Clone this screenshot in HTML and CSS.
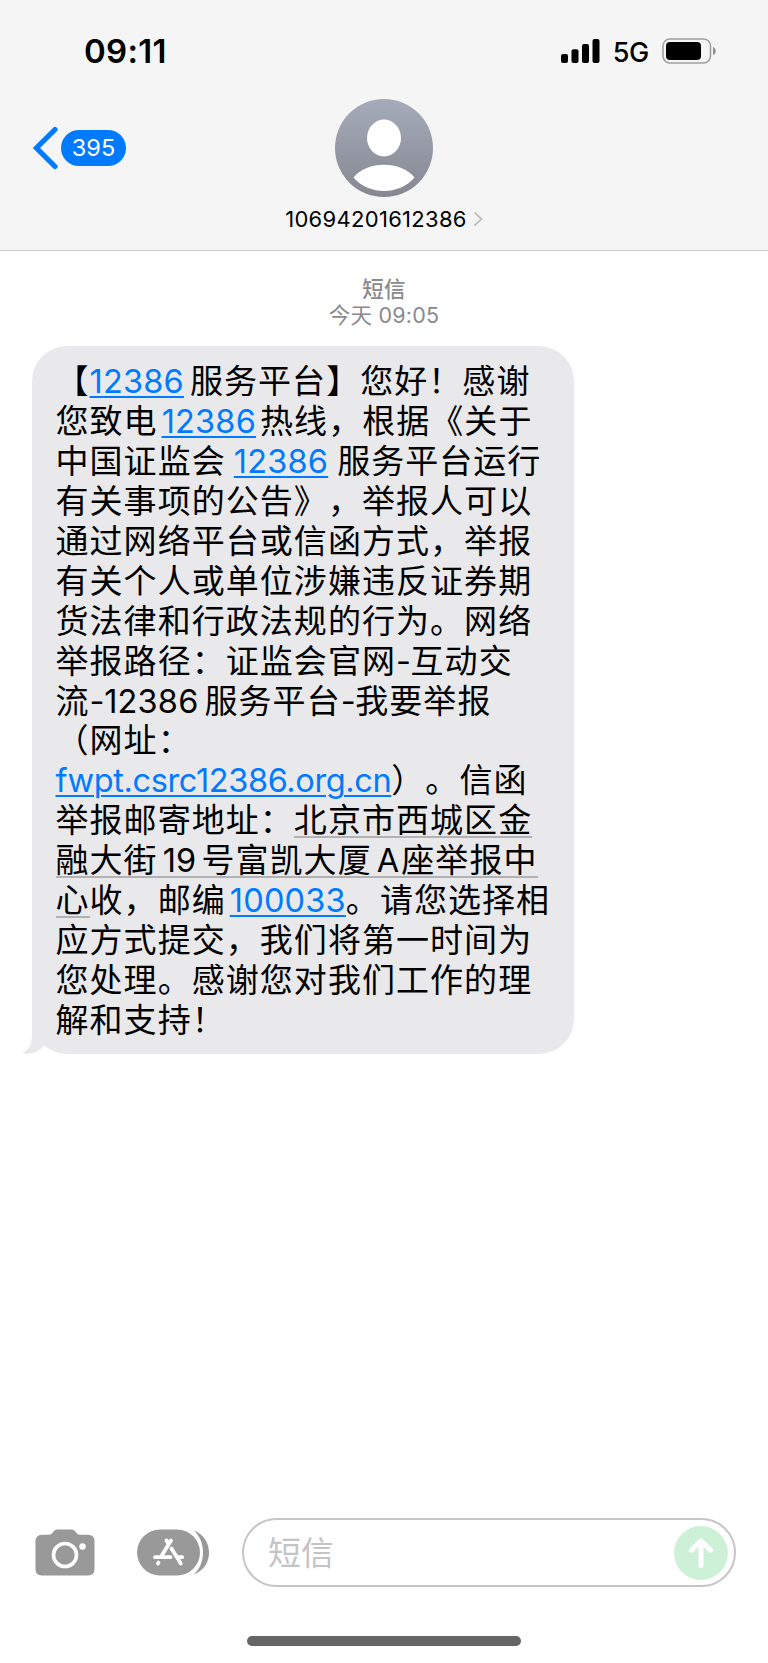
FILE: index.html
```html
<!DOCTYPE html>
<html lang="zh-CN">
<head>
    <meta charset="UTF-8">
    <meta name="viewport" content="width=device-width, initial-scale=1.0">
    <title>短信</title>
    <link rel="stylesheet" href="styles.css">
</head>
<body>
    <header class="header">
        <div class="status-bar">
            <span class="time">09:11</span>
            <div class="status-icons">
                <svg class="signal" width="39" height="24" viewBox="0 0 39 24">
                    <rect x="0" y="15" width="7" height="9" rx="2"/>
                    <rect x="10.5" y="10.3" width="7" height="13.7" rx="2"/>
                    <rect x="21" y="5" width="7" height="19" rx="2"/>
                    <rect x="31.5" y="0" width="7" height="24" rx="2"/>
                </svg>
                <span class="network">5G</span>
                <svg class="battery" width="55" height="26" viewBox="0 0 55 26">
                    <rect x="1" y="1" width="47.5" height="24" rx="7" fill="none" stroke="#a0a0a0" stroke-width="1.6"/>
                    <rect x="4" y="4" width="35" height="18" rx="4"/>
                    <path d="M51 9c3.600 1.200 3.600 7 0 8z" fill="#8f8f8f"/>
                </svg>
            </div>
        </div>
        <div class="nav">
            <a class="back">
                <svg width="26" height="44" viewBox="0 0 26 44">
                    <path d="M22 3.500L3.500 22L22 40.500" fill="none" stroke="#007aff" stroke-width="5.200" stroke-linecap="round" stroke-linejoin="miter"/>
                </svg>
                <span class="unread">395</span>
            </a>
            <div class="contact">
                <svg class="avatar" width="98" height="98" viewBox="0 0 98 98">
                    <defs>
                        <linearGradient id="avatar-bg" x1="0" y1="0" x2="0" y2="1">
                            <stop offset="0" stop-color="#a5abb9"/>
                            <stop offset="1" stop-color="#858891"/>
                        </linearGradient>
                    </defs>
                    <circle cx="49" cy="49" r="49" fill="url(#avatar-bg)"/>
                    <ellipse cx="49" cy="39" rx="17" ry="18.500" fill="#fff"/>
                    <path d="M18.500 78.500C32 61.500 66 61.500 79.500 78.500C64 96.500 34 96.500 18.500 78.500z" fill="#fff"/>
                </svg>
                <div class="contact-name">
                    <span>10694201612386</span>
                    <svg width="10" height="16" viewBox="0 0 10 16">
                        <path d="M1.500 1.500L8.500 8l-7 6.500" fill="none" stroke="#c0c0c2" stroke-width="1.800"/>
                    </svg>
                </div>
            </div>
        </div>
    </header>

    <main class="messages">
        <div class="timestamp">
            <p class="kind">短信</p>
            <p>今天 <span class="clock">09:05</span></p>
        </div>
        <div class="bubble">
            <p>【<a class="num pad">12386</a><span class="after">服务平台】您好！感谢</span></p>
            <p>您致电<a class="num pad gap">12386</a><span class="after-link">热线，根据《关于</span></p>
            <p>中国证监会<a class="num gap-wide">12386</a><span class="after-wide">服务平台运行</span></p>
            <p>有关事项的公告》，举报人可以</p>
            <p>通过网络平台或信函方式，举报</p>
            <p>有关个人或单位涉嫌违反证券期</p>
            <p>货法律和行政法规的行为。网络</p>
            <p>举报路径：证监会官网<span class="dash">-</span>互动交</p>
            <p>流<span class="dash">-</span><span class="num pad">12386</span><span class="after">服务平台</span><span class="dash">-</span>我要举报</p>
            <p>（网址：</p>
            <p><a class="url">fwpt.csrc12386.org.cn</a>）。信函</p>
            <p>举报邮寄地址：<span class="address">北京市西城区金</span></p>
            <p><span class="address">融大街<span class="latin">19</span>号富凯大厦<span class="latin letter">A</span>座举报中</span></p>
            <p><span class="address">心</span>收，邮编<a class="num gap">100033</a>。请您选择相</p>
            <p>应方式提交，我们将第一时间为</p>
            <p>您处理。感谢您对我们工作的理</p>
            <p>解和支持！</p>
            <svg class="tail" width="32" height="34" viewBox="0 0 32 34">
                <path d="M10 0V14C10 24 7 30 0 33.200C9 35 17 32 23 25L32 0z" fill="#e9e9eb"/>
            </svg>
        </div>
    </main>

    <footer class="toolbar">
        <svg class="camera" width="60" height="47" viewBox="0 0 60 47">
            <path d="M7 5.800H14C18 5.800 18 .500 22.500 .500H36.500C41 .500 41 5.800 45 5.800H53Q59.500 5.800 59.500 12.500V40Q59.500 46.500 53 46.500H7Q.500 46.500 .500 40V12.500Q.500 5.800 7 5.800z" fill="#999"/>
            <circle cx="30" cy="26" r="11.500" fill="none" stroke="#fff" stroke-width="3.600"/>
            <circle cx="47.500" cy="17.500" r="3.200" fill="#fff"/>
        </svg>
        <svg class="apps" width="73" height="47" viewBox="0 0 73 47">
            <path d="M57 1.500C66 5 72 13 72 23.500S66 42 57 45.500C69 34 69 13 57 1.500z" fill="#999"/>
            <rect x="0" y="0.500" width="63" height="46" rx="23" fill="#999"/>
            <g fill="none" stroke="#fff" stroke-width="3.800" stroke-linecap="round">
                <path d="M29.500 11.500L31.500 15M34 11.500L24.800 26.500M34.500 19.500L43.800 34.500"/>
                <path d="M18 28.200H33.500M40.500 28.200H45.200M21.500 33.600L21 34.500"/>
            </g>
        </svg>
        <div class="input">
            <span class="placeholder">短信</span>
            <svg width="54" height="54" viewBox="0 0 54 54">
                <circle cx="27" cy="27" r="27" fill="#cdf1d6"/>
                <path d="M27 39.500V15M17.300 24.300L27 14.800l9.700 9.500" fill="none" stroke="#fff" stroke-width="5" stroke-linecap="round" stroke-linejoin="round"/>
            </svg>
        </div>
    </footer>
    <div class="home-bar"></div>
</body>
</html>
```

FILE: styles.css
```css
* {
    margin: 0;
    padding: 0;
    box-sizing: border-box;
}

body {
    width: 768px;
    height: 1663px;
    display: flex;
    flex-direction: column;
    background: #fff;
    color: #000;
    font-family: 'Inter', 'Noto Sans CJK SC', sans-serif;
    overflow: hidden;
}

svg {
    display: block;
    flex-shrink: 0;
}

/* Header */
.header {
    height: 251px;
    background: #f5f5f5;
    border-bottom: 1px solid #c8c8ca;
}

.status-bar {
    height: 99px;
    padding: 3px 51px 0 84px;
    display: flex;
    align-items: center;
    justify-content: space-between;
}

.time {
    font-size: 33px;
    font-weight: 600;
    letter-spacing: 0.3px;
}

.status-icons {
    display: flex;
    align-items: center;
}

.network {
    margin: 2px 13px 0;
    font-size: 27px;
    font-weight: 500;
    letter-spacing: -0.3px;
}

.nav {
    display: grid;
    grid-template-columns: 1fr 220px 1fr;
}

.back {
    height: 98px;
    padding-left: 33px;
    display: flex;
    align-items: center;
    gap: 2px;
}

.unread {
    width: 65px;
    height: 36px;
    border-radius: 18px;
    background: #007aff;
    color: #fff;
    font-size: 23.5px;
    line-height: 36px;
    text-align: center;
}

.contact {
    display: flex;
    flex-direction: column;
    align-items: center;
}

.contact-name {
    margin-top: 8px;
    display: flex;
    align-items: center;
    gap: 6px;
    font-size: 22px;
    letter-spacing: 0.3px;
    line-height: 28px;
}

/* Messages */
.messages {
    flex: 1;
    padding: 25px 0 0 32px;
}

.timestamp {
    width: 704px;
    height: 70px;
    text-align: center;
    color: #8a8a8e;
    font-size: 21.5px;
    letter-spacing: 0.2px;
    line-height: 26px;
}

.kind {
    font-weight: 500;
}

.bubble {
    position: relative;
    width: 542px;
    height: 708px;
    padding: 14px 0 0 23.5px;
    border-radius: 35px;
    background: #e9e9eb;
    font-family: 'Noto Sans CJK SC', sans-serif;
    font-size: 33px;
    letter-spacing: 1.05px;
    line-height: 39.95px;
    white-space: nowrap;
    text-spacing-trim: space-all;
}

.bubble p {
    height: 39.95px;
}

.num,
.url,
.latin,
.dash {
    font-family: 'Inter', sans-serif;
    font-size: 32.5px;
    letter-spacing: 0.2px;
}

a.num,
.url {
    color: #007aff;
    text-decoration: underline;
    text-decoration-thickness: 2px;
    text-underline-offset: 3px;
}

.url {
    letter-spacing: -0.38px;
}

.dash {
    letter-spacing: -0.4px;
}

.pad {
    padding-right: 1px;
}

.gap {
    margin-left: 4px;
}

.gap-wide {
    margin-left: 8px;
}

.after {
    margin-left: 5px;
}

.after-link {
    margin-left: 3px;
}

.after-wide {
    margin-left: 9px;
}

.latin {
    margin: 0 5px;
}

.letter {
    margin-right: 2px;
}

/* One unbroken line under mixed Chinese and Latin text */
.address {
    background: linear-gradient(#b2b2b4, #b2b2b4) 0 calc(100% - 4px) / 100% 2px no-repeat;
}

.tail {
    position: absolute;
    left: -10px;
    bottom: 0;
}

/* Toolbar */
.toolbar {
    height: 69px;
    padding: 0 32px 0 35px;
    display: flex;
    align-items: center;
}

.apps {
    margin: 0 32px 0 42px;
}

.input {
    flex: 1;
    height: 69px;
    padding: 0 6px 0 24px;
    border: 2px solid #c6c6c8;
    border-radius: 35px;
    display: flex;
    align-items: center;
    justify-content: space-between;
}

.placeholder {
    color: #c4c4c6;
    font-size: 33px;
    line-height: 40px;
}

.home-bar {
    width: 274px;
    height: 10px;
    margin: 49px auto 17px;
    border-radius: 5px;
    background: #666;
}
```
